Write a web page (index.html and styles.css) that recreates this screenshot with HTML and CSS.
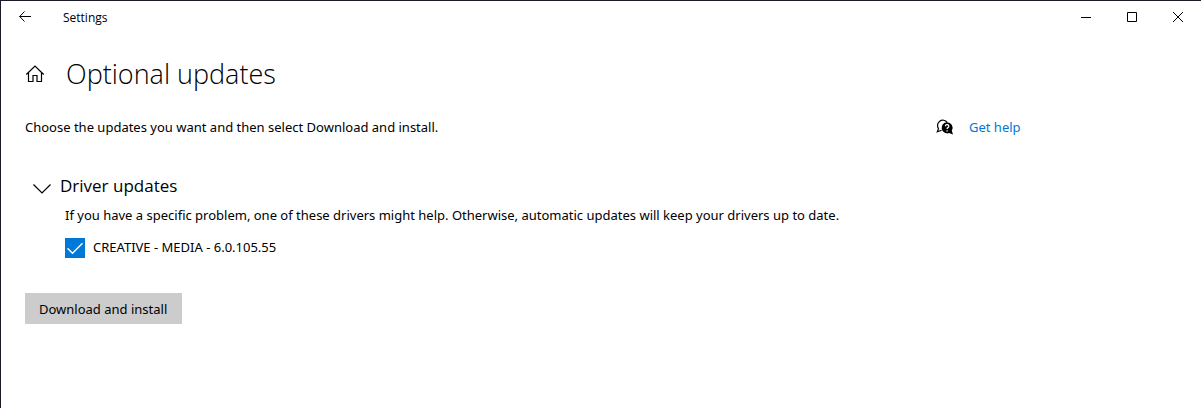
FILE: index.html
```html
<!DOCTYPE html>
<html lang="en">
<head>
  <meta charset="UTF-8" />
  <meta name="viewport" content="width=device-width, initial-scale=1.0"/>
  <title>Settings</title>
  <link rel="stylesheet" href="styles.css">
</head>
<body>

  <header class="titlebar">
    <button class="back" aria-label="Back">
      <svg width="12" height="12" viewBox="0 0 12 12"><path d="M0.5 5.5H12M5.5 0.5L0.7 5.5L5.5 10.5"/></svg>
    </button>
    <span class="app-name">Settings</span>
    <div class="window-buttons">
      <button aria-label="Minimize">
        <svg width="10" height="10" viewBox="0 0 10 10"><path d="M0 5.5H10"/></svg>
      </button>
      <button aria-label="Maximize">
        <svg width="10" height="10" viewBox="0 0 10 10"><path d="M0.5 0.5H9.5V9.5H0.5Z"/></svg>
      </button>
      <button aria-label="Close">
        <svg width="10" height="10" viewBox="0 0 10 10"><path d="M0 0L10 10M10 0L0 10"/></svg>
      </button>
    </div>
  </header>

  <main class="page">
    <div class="heading">
      <a class="home" href="#" aria-label="Home">
        <svg width="20" height="20" viewBox="0 0 20 20"><path d="M1.3 10.5L10 2L18.7 10.5M3.5 8.8V17.5H8V11.5H12V17.5H16.5V8.8"/></svg>
      </a>
      <h1>Optional updates</h1>
    </div>

    <div class="columns">
      <div class="content">
        <p class="intro">Choose the updates you want and then select Download and install.</p>

        <section class="drivers">
          <button class="expander">
            <svg width="18" height="10" viewBox="0 0 18 10"><path d="M0.5 0.5L9 9L17.5 0.5"/></svg>
            <span>Driver updates</span>
          </button>
          <p class="note">If you have a specific problem, one of these drivers might help. Otherwise, automatic updates will keep your drivers up to date.</p>
          <label class="driver">
            <span class="box">
              <input type="checkbox" checked>
              <svg width="20" height="20" viewBox="0 0 20 20"><path d="M2.5 10.2L7.5 15.2L17.5 5.2"/></svg>
            </span>
            CREATIVE - MEDIA - 6.0.105.55
          </label>
        </section>

        <button class="install">Download and install</button>
      </div>

      <aside class="help">
        <svg width="18" height="18" viewBox="0 0 18 18">
          <path class="bubble" d="M5.6 12.2L1.3 13.8L2.5 10.6A5.2 5.2 0 1 1 11.2 4.4"/>
          <path class="bubble-fill" d="M11 4.2A5.6 5.6 0 0 1 15.8 12.7L17 16.4L13 15.1A5.6 5.6 0 1 1 11 4.2Z"/>
          <path class="mark" d="M9.4 8.3A1.7 1.6 0 1 1 11.9 9.6Q11.1 10.1 11.1 11M11.1 12.2V13.5"/>
        </svg>
        <a href="#">Get help</a>
      </aside>
    </div>
  </main>

</body>
</html>
```
FILE: styles.css
```css
:root {
  --text: #000000;
  --accent: #0078d7;
  --link: #0078d7;
  --frame: #1c1a28;
  --btn-bg: #cccccc;
}

* {
  margin: 0;
  padding: 0;
  box-sizing: border-box;
}

body {
  min-height: 100vh;
  background: #ffffff;
  color: var(--text);
  font-family: 'Segoe UI', 'Noto Sans', sans-serif;
  font-size: 13px;
  line-height: 20px;
  border-top: 1px solid var(--frame);
  border-left: 1px solid var(--frame);
}

button {
  border: none;
  background: none;
  color: inherit;
  font: inherit;
  cursor: pointer;
}

svg {
  display: block;
  fill: none;
  stroke: var(--text);
}

.titlebar {
  display: flex;
  align-items: center;
  height: 32px;
}

.back {
  width: 48px;
  height: 32px;
  display: grid;
  place-items: center;
}

.app-name {
  margin-left: 14px;
  padding-top: 2px;
  font-family: 'Segoe UI', 'Open Sans', sans-serif;
  font-size: 12px;
}

.window-buttons {
  display: flex;
  margin-left: auto;
}

.window-buttons button {
  width: 46px;
  height: 32px;
  display: grid;
  place-items: center;
}

.page {
  padding: 21px 24px;
}

.heading {
  display: flex;
  align-items: center;
  gap: 21px;
  margin-bottom: 23px;
}

h1 {
  font-family: 'Segoe UI', 'Open Sans', sans-serif;
  font-size: 27px;
  font-weight: 300;
  line-height: 40px;
}

.home svg {
  stroke-width: 1.2;
}

.columns {
  display: flex;
  gap: 24px;
}

.content {
  flex: 0 1 887px;
}

.drivers {
  margin: 36px 0 35px;
  padding-left: 8px;
}

.expander {
  display: flex;
  align-items: center;
  gap: 9px;
  padding-top: 1px;
  font-family: 'Segoe UI', 'Open Sans', sans-serif;
  font-size: 17px;
  line-height: 24px;
}

.expander svg {
  margin-top: 5px;
  stroke-width: 1.2;
}

.note {
  margin: 7px 0 11px 32px;
}

.driver {
  display: flex;
  align-items: center;
  gap: 8px;
  margin-left: 32px;
}

.box {
  display: grid;
  padding-top: 2px;
}

.box input,
.box svg {
  grid-area: 1 / 1;
}

.box input {
  appearance: none;
  width: 20px;
  height: 20px;
  border: 2px solid #333333;
}

.box input:checked {
  border-color: var(--accent);
  background: var(--accent);
}

.box svg {
  stroke: #ffffff;
  stroke-width: 1.4;
  pointer-events: none;
}

.install {
  padding: 6px 15px 5px 14px;
  background: var(--btn-bg);
}

.help {
  display: flex;
  align-items: center;
  align-self: flex-start;
  gap: 15px;
}

.help a {
  color: var(--link);
  text-decoration: none;
}

.bubble {
  stroke-width: 1.2;
}

.bubble-fill {
  fill: var(--text);
  stroke: none;
}

.mark {
  stroke: #ffffff;
  stroke-width: 1.3;
}
```
